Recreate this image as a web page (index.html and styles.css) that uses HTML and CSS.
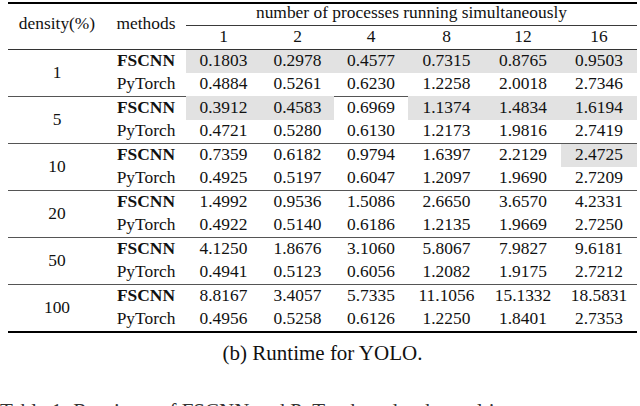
FILE: index.html
```html
<!DOCTYPE html>
<html lang="en">
<head>
<meta charset="utf-8">
<title>Runtime for YOLO</title>
<link rel="stylesheet" href="styles.css">
</head>
<body>
<div class="page">
  <div class="tbl">
    <div class="lab den-h">density(%)</div>
    <div class="lab meth-h">methods</div>
    <div class="span-h">number of processes running simultaneously</div>
    <div class="cmid"></div>
    <div class="c h2">1</div><div class="c h2">2</div><div class="c h2">4</div><div class="c h2">8</div><div class="c h2">12</div><div class="c h2">16</div>
    <div class="midrule"></div>

    <div class="g">1</div>
    <div class="c b">FSCNN</div><div class="c hl">0.1803</div><div class="c hl">0.2978</div><div class="c hl">0.4577</div><div class="c hl">0.7315</div><div class="c hl">0.8765</div><div class="c hl">0.9503</div>
    <div class="c">PyTorch</div><div class="c">0.4884</div><div class="c">0.5261</div><div class="c">0.6230</div><div class="c">1.2258</div><div class="c">2.0018</div><div class="c">2.7346</div>
    <div class="rule"></div>

    <div class="g">5</div>
    <div class="c b">FSCNN</div><div class="c hl cover">0.3912</div><div class="c hl cover">0.4583</div><div class="c">0.6969</div><div class="c hl cover">1.1374</div><div class="c hl cover">1.4834</div><div class="c hl cover">1.6194</div>
    <div class="c">PyTorch</div><div class="c">0.4721</div><div class="c">0.5280</div><div class="c">0.6130</div><div class="c">1.2173</div><div class="c">1.9816</div><div class="c">2.7419</div>
    <div class="rule"></div>

    <div class="g">10</div>
    <div class="c b">FSCNN</div><div class="c">0.7359</div><div class="c">0.6182</div><div class="c">0.9794</div><div class="c">1.6397</div><div class="c">2.2129</div><div class="c hl">2.4725</div>
    <div class="c">PyTorch</div><div class="c">0.4925</div><div class="c">0.5197</div><div class="c">0.6047</div><div class="c">1.2097</div><div class="c">1.9690</div><div class="c">2.7209</div>
    <div class="rule"></div>

    <div class="g">20</div>
    <div class="c b">FSCNN</div><div class="c">1.4992</div><div class="c">0.9536</div><div class="c">1.5086</div><div class="c">2.6650</div><div class="c">3.6570</div><div class="c">4.2331</div>
    <div class="c">PyTorch</div><div class="c">0.4922</div><div class="c">0.5140</div><div class="c">0.6186</div><div class="c">1.2135</div><div class="c">1.9669</div><div class="c">2.7250</div>
    <div class="rule"></div>

    <div class="g">50</div>
    <div class="c b">FSCNN</div><div class="c">4.1250</div><div class="c">1.8676</div><div class="c">3.1060</div><div class="c">5.8067</div><div class="c">7.9827</div><div class="c">9.6181</div>
    <div class="c">PyTorch</div><div class="c">0.4941</div><div class="c">0.5123</div><div class="c">0.6056</div><div class="c">1.2082</div><div class="c">1.9175</div><div class="c">2.7212</div>
    <div class="rule"></div>

    <div class="g">100</div>
    <div class="c b">FSCNN</div><div class="c">8.8167</div><div class="c">3.4057</div><div class="c">5.7335</div><div class="c">11.1056</div><div class="c">15.1332</div><div class="c">18.5831</div>
    <div class="c">PyTorch</div><div class="c">0.4956</div><div class="c">0.5258</div><div class="c">0.6126</div><div class="c">1.2250</div><div class="c">1.8401</div><div class="c">2.7353</div>
  </div>
  <p class="cap">(b) Runtime for YOLO.</p>
  <p class="next">Table 1: Runtimes of FSCNN and PyTorch under the multi-process</p>
</div>
</body>
</html>
```

FILE: styles.css
```css
html, body {
  margin: 0;
  padding: 0;
  background: #fff;
  overflow: hidden;
}

body {
  font-family: "Liberation Serif", "Times New Roman", serif;
  color: #111;
}

.page {
  padding: 2px 0 0 8px;
  width: 629px;
}

.tbl {
  display: grid;
  grid-template-columns: 98px 80px 75px 73px 74px 77px 76px 76px;
  grid-template-rows: 21px 1px 23px 1px repeat(5, 23px 23px 1px) 23px 23px;
  width: 629px;
  border-top: 2px solid #000;
  border-bottom: 2px solid #000;
  font-size: 17.4px;
}

.lab {
  grid-row: 1 / 4;
  display: flex;
  align-items: center;
  justify-content: center;
  line-height: 20px;
  padding-bottom: 7px;
  white-space: nowrap;
}

.den-h { grid-column: 1; }
.meth-h { grid-column: 2; }

.span-h {
  grid-column: 3 / 9;
  grid-row: 1;
  text-align: center;
  line-height: 17px;
  padding-bottom: 4px;
  white-space: nowrap;
}

.cmid {
  grid-column: 3 / 9;
  grid-row: 2;
  background: #3a3a3a;
}

.h2 { grid-row: 3; }

.midrule {
  grid-column: 1 / -1;
  grid-row: 4;
  background: #333;
}

.rule {
  grid-column: 1 / -1;
  background: #555;
}

.c {
  text-align: center;
  line-height: 20px;
  padding-bottom: 3px;
  white-space: nowrap;
}

.b { font-weight: bold; }

.g {
  grid-column: 1;
  grid-row: span 2;
  display: flex;
  align-items: center;
  justify-content: center;
  line-height: 20px;
  padding-bottom: 2px;
}

.hl { background: #e2e2e2; }

.hl.cover {
  margin-top: -1px;
  padding-top: 1px;
}

.cap {
  margin: 8px 0 0 0;
  width: 629px;
  text-align: center;
  font-size: 21px;
  line-height: 24px;
}

.next {
  margin: 34px 0 0 -8px;
  font-size: 21px;
  line-height: 24px;
  white-space: nowrap;
  color: #333;
}
```
